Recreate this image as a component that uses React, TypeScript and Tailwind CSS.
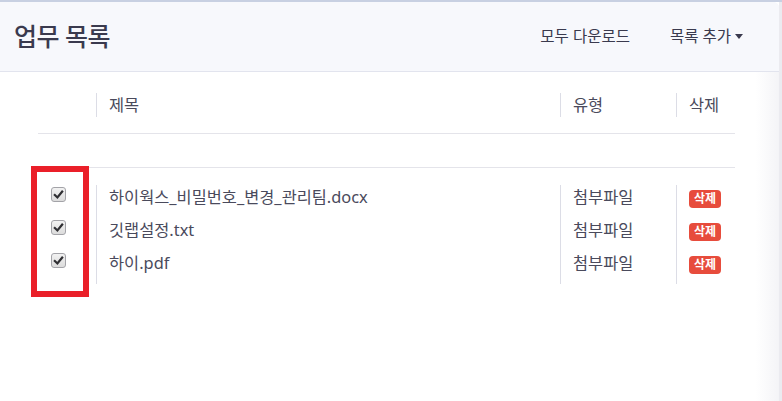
import React from 'react';

const files = [
  { name: '하이웍스_비밀번호_변경_관리팀.docx', type: '첨부파일' },
  { name: '깃랩설정.txt', type: '첨부파일' },
  { name: '하이.pdf', type: '첨부파일' },
];

function CheckBox() {
  return (
    <span className="w-[15px] h-[15px] rounded-[3px] border border-[#a3a3a8] bg-gradient-to-b from-[#f2f2f2] to-[#dcdcdc] flex items-center justify-center">
      <svg width="11" height="11" viewBox="0 0 12 12">
        <path d="M2 6.5 L4.8 9.2 L10 2.8" fill="none" stroke="#2f2f33" strokeWidth="2.4" strokeLinecap="square" />
      </svg>
    </span>
  );
}

export default function App() {
  return (
    <div
      className="w-[782px] h-[401px] overflow-hidden bg-white border-t-2 border-[#c8d0e2] flex"
      style={{ fontFamily: "'Noto Sans', 'Noto Sans CJK KR', sans-serif" }}
    >
      <div className="relative w-[779px] flex flex-col rounded-tr-[6px] overflow-hidden bg-gradient-to-r from-white from-[97%] to-[#f4f4f7]">
        <div className="h-[70px] shrink-0 bg-[#f7f8fc] border-b border-[#e2e4ee] flex items-center justify-between pl-[14px] pr-[36px]">
          <h1 className="text-[25px] font-medium text-[#3a3a4e] tracking-[-0.5px]">업무 목록</h1>
          <div className="flex items-center gap-[40px] text-[15.5px] text-[#3a3a4e]">
            <span>모두 다운로드</span>
            <span className="flex items-center">
              목록 추가
              <span className="ml-[4px] inline-block border-t-[5px] border-x-[4px] border-x-transparent border-t-[#3a3a4e]" />
            </span>
          </div>
        </div>

        <div className="pl-[38px] pr-[44px] text-[16.4px] text-[#4a4a5c]">
          <div className="h-[62px] pt-[21px] flex items-start border-b border-[#e4e4ea]">
            <div className="w-[58px]" />
            <div className="w-[464px] h-[24px] border-l border-[#dcdde6] pl-[12px] flex items-center">제목</div>
            <div className="w-[116px] h-[24px] border-l border-[#dcdde6] pl-[12px] flex items-center">유형</div>
            <div className="flex-1 h-[24px] border-l border-[#dcdde6] pl-[12px] flex items-center">삭제</div>
          </div>
          <div className="h-[34px] border-b border-[#e4e4ea]" />

          <div className="pt-[17px] flex items-start">
            <div className="w-[58px] -mt-[7px] flex flex-col">
              {files.map(f => (
                <div key={f.name} className="h-[33px] flex items-center pl-[13px]">
                  <CheckBox />
                </div>
              ))}
            </div>
            <div className="w-[464px] h-[99px] border-l border-[#dcdde6] pl-[12px]">
              <div className="-mt-[5px]">
                {files.map(f => (
                  <div key={f.name} className="h-[33px] leading-[33px]">{f.name}</div>
                ))}
              </div>
            </div>
            <div className="w-[116px] h-[99px] border-l border-[#dcdde6] pl-[12px]">
              <div className="-mt-[5px]">
                {files.map(f => (
                  <div key={f.name} className="h-[33px] leading-[33px]">{f.type}</div>
                ))}
              </div>
            </div>
            <div className="flex-1 h-[99px] border-l border-[#dcdde6] pl-[12px]">
              <div className="-mt-[3px]">
                {files.map(f => (
                  <div key={f.name} className="h-[33px] flex items-center">
                    <span className="h-[18px] px-[5px] rounded-[4px] bg-[#e74c3c] text-white text-[12px] font-bold leading-[18px]">
                      삭제
                    </span>
                  </div>
                ))}
              </div>
            </div>
          </div>
        </div>

        <div className="absolute left-[31px] top-[164px] w-[58px] h-[131px] border-[6px] border-[#ea1f29]" />
      </div>
      <div className="w-[3px] bg-[#ebebf0]" />
    </div>
  );
}
